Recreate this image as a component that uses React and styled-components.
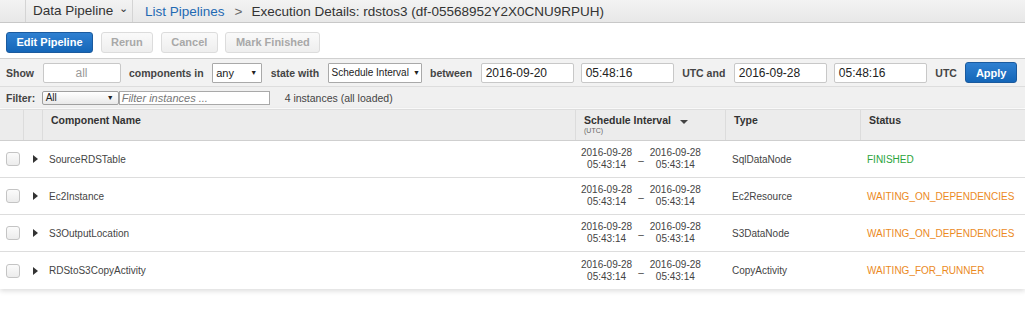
import React from 'react';
import styled, { createGlobalStyle } from 'styled-components';

const GlobalStyle = createGlobalStyle`
    * { box-sizing: border-box; }
    body {
        margin: 0;
        background: #ffffff;
        font-family: 'Liberation Sans', Arial, sans-serif;
        color: #333333;
    }
`;

const instances = [
    { name: "SourceRDSTable", type: "SqlDataNode", status: "FINISHED" },
    { name: "Ec2Instance", type: "Ec2Resource", status: "WAITING_ON_DEPENDENCIES" },
    { name: "S3OutputLocation", type: "S3DataNode", status: "WAITING_ON_DEPENDENCIES" },
    { name: "RDStoS3CopyActivity", type: "CopyActivity", status: "WAITING_FOR_RUNNER" },
];

const cols = "23px 19px 533px 150px 135px 1fr";

export default function App() {
    return (
        <Page>
            <GlobalStyle />
            <TopBar>
                <Spacer />
                <Service>Data Pipeline <Chevron>⌄</Chevron></Service>
                <Crumbs>
                    <CrumbLink>List Pipelines</CrumbLink>
                    <CrumbSep>&gt;</CrumbSep>
                    <span>Execution Details: rdstos3 (df-05568952Y2X0CNU9RPUH)</span>
                </Crumbs>
            </TopBar>

            <Toolbar>
                <Button primary>Edit Pipeline</Button>
                <Button disabled>Rerun</Button>
                <Button disabled>Cancel</Button>
                <Button disabled>Mark Finished</Button>
            </Toolbar>

            <FilterBar>
                <Label>Show</Label>
                <TextBox width="78px" center placeholderish>all</TextBox>
                <Label>components in</Label>
                <Select width="50px">any<Arrow>▼</Arrow></Select>
                <Label>state with</Label>
                <Select width="94px" small>Schedule Interval<Arrow>▼</Arrow></Select>
                <Label>between</Label>
                <TextBox width="93px">2016-09-20</TextBox>
                <TextBox width="93px">05:48:16</TextBox>
                <Label>UTC and</Label>
                <TextBox width="93px">2016-09-28</TextBox>
                <TextBox width="93px">05:48:16</TextBox>
                <Label>UTC</Label>
                <Button primary>Apply</Button>
            </FilterBar>

            <SearchBar>
                <Label>Filter:</Label>
                <MiniSelect>All<Arrow>▼</Arrow></MiniSelect>
                <SearchInput>Filter instances ...</SearchInput>
                <Count>4 instances (all loaded)</Count>
            </SearchBar>

            <Table>
                <HeadRow>
                    <HeadCell />
                    <HeadCell />
                    <HeadCell pad="8px">Component Name</HeadCell>
                    <HeadCell pad="8px">
                        <SortTitle>Schedule Interval <SortCaret /></SortTitle>
                        <Sub>(UTC)</Sub>
                    </HeadCell>
                    <HeadCell pad="8px">Type</HeadCell>
                    <HeadCell pad="8px">Status</HeadCell>
                </HeadRow>
                {instances.map(i =>
                    <Row key={i.name}>
                        <Cell center><Check /></Cell>
                        <Cell><Expand /></Cell>
                        <Cell pad="7px">{i.name}</Cell>
                        <Cell pad="7px">
                            <Interval>
                                <Stamp>2016-09-28<br />05:43:14</Stamp>
                                <Dash>–</Dash>
                                <Stamp>2016-09-28<br />05:43:14</Stamp>
                            </Interval>
                        </Cell>
                        <Cell pad="7px">{i.type}</Cell>
                        <Cell pad="7px">
                            <Status color={i.status === "FINISHED" ? "#2ba43b" : "#eb8a1e"}>{i.status}</Status>
                        </Cell>
                    </Row>
                )}
            </Table>
        </Page>
    )
}

const Page = styled.div`
    width: 1025px;
    height: 324px;
    overflow: hidden;
    background: #ffffff;
`;

const TopBar = styled.div`
    display: flex;
    align-items: stretch;
    height: 23px;
    background: linear-gradient(#f3f3f3, #e8e8e8);
    border-bottom: 1px solid #c8c8c8;
    font-size: 13.5px;
    color: #333333;
    white-space: nowrap;
`;

const Spacer = styled.div`
    width: 26px;
    flex-shrink: 0;
    border-right: 1px solid #d4d4d4;
`;

const Service = styled.div`
    display: flex;
    align-items: center;
    width: 107px;
    flex-shrink: 0;
    padding-left: 7px;
    border-right: 1px solid #d4d4d4;
    line-height: 1;
`;

const Chevron = styled.span`
    font-size: 11px;
    margin-left: 6px;
    position: relative;
    top: -3px;
`;

const Crumbs = styled.div`
    display: flex;
    align-items: center;
    padding-left: 12px;
`;

const CrumbLink = styled.span`
    color: #1f6ab3;
`;

const CrumbSep = styled.span`
    color: #666666;
    margin: 0 9px 0 10px;
`;

const Toolbar = styled.div`
    display: flex;
    align-items: center;
    gap: 7.5px;
    height: 36px;
    padding: 3px 6px 0;
    border-bottom: 1px solid #d0d0d0;
`;

const Button = styled.div`
    display: flex;
    align-items: center;
    flex-shrink: 0;
    height: 21px;
    padding: 0 9.5px;
    border-radius: 3px;
    font-size: 11px;
    font-weight: 700;
    white-space: nowrap;
    color: ${p => p.disabled ? "#a8a8a8" : "#ffffff"};
    border: 1px solid ${p => p.primary ? "#1a5a9e" : "#dcdcdc"};
    background: ${p => p.primary ? "linear-gradient(#2f80d1, #1466b8)" : "linear-gradient(#fafafa, #eeeeee)"};
`;

const FilterBar = styled.div`
    display: flex;
    align-items: center;
    gap: 7px;
    height: 28px;
    padding: 0 6px;
    background: #f2f2f2;
    border-bottom: 1px solid #dddddd;
`;

const Label = styled.span`
    flex-shrink: 0;
    font-size: 10.5px;
    font-weight: 700;
    color: #444444;
    margin: 0 1.5px;
    white-space: nowrap;
    &:first-child { margin-left: 0; }
`;

const TextBox = styled.div`
    display: flex;
    align-items: center;
    flex-shrink: 0;
    justify-content: ${p => p.center ? "center" : "flex-start"};
    width: ${p => p.width};
    height: 20px;
    padding: 0 4px;
    background: #ffffff;
    border: 1px solid #c8c8c8;
    border-radius: 2px;
    font-size: 12px;
    color: ${p => p.placeholderish ? "#999999" : "#222222"};
`;

const Select = styled.div`
    display: flex;
    align-items: center;
    flex-shrink: 0;
    justify-content: space-between;
    width: ${p => p.width};
    height: 20px;
    padding: 0 4px 0 3px;
    background: #ffffff;
    border: 1px solid #a9a9a9;
    border-radius: 1px;
    font-size: ${p => p.small ? "10px" : "11px"};
    color: #222222;
    white-space: nowrap;
`;

const Arrow = styled.span`
    font-size: 7px;
    color: #222222;
    margin-left: 4px;
`;

const SearchBar = styled.div`
    display: flex;
    align-items: center;
    height: 21px;
    padding: 0 6px;
    background: #f0f0f0;
`;

const MiniSelect = styled.div`
    display: flex;
    align-items: center;
    justify-content: space-between;
    width: 77px;
    height: 14px;
    margin-left: 5px;
    padding: 0 4px 0 3px;
    font-size: 10px;
    color: #222222;
    background: linear-gradient(#ffffff, #e9e9e9);
    border: 1px solid #a0a0a0;
    border-radius: 2px;
`;

const SearchInput = styled.div`
    display: flex;
    align-items: center;
    width: 151px;
    height: 14px;
    padding: 0 2px;
    background: #ffffff;
    border: 1px solid #a9a9a9;
    font-size: 11px;
    font-style: italic;
    color: #777777;
`;

const Count = styled.span`
    font-size: 10.5px;
    color: #444444;
    margin-left: 15px;
`;

const Table = styled.div`
    margin-top: 1px;
    border-top: 1px solid #dddddd;
    box-shadow: 0 2px 5px rgba(0, 0, 0, 0.14);
`;

const HeadRow = styled.div`
    display: grid;
    grid-template-columns: ${cols};
    height: 31px;
    background: #ececec;
    border-bottom: 1px solid #cfcfcf;
`;

const HeadCell = styled.div`
    padding: 4px ${p => p.pad || "0"} 0;
    border-left: 1px solid #dcdcdc;
    font-size: 10.5px;
    font-weight: 700;
    color: #333333;
    &:first-child { border-left: none; }
`;

const SortTitle = styled.div`
    display: flex;
    align-items: center;
`;

const SortCaret = styled.span`
    margin-left: 9px;
    margin-top: 4px;
    width: 0;
    height: 0;
    border-left: 4px solid transparent;
    border-right: 4px solid transparent;
    border-top: 4px solid #444444;
`;

const Sub = styled.div`
    font-size: 7px;
    font-weight: 400;
    color: #666666;
    margin-top: 1px;
`;

const Row = styled.div`
    display: grid;
    grid-template-columns: ${cols};
    height: 37px;
    border-bottom: 1px solid #dddddd;
    &:last-child { border-bottom: none; }
`;

const Cell = styled.div`
    display: flex;
    align-items: center;
    justify-content: ${p => p.center ? "center" : "flex-start"};
    padding: 0 ${p => p.pad || "0"};
    font-size: 10px;
    color: #444444;
    white-space: nowrap;
`;

const Check = styled.span`
    width: 14px;
    height: 14px;
    margin-left: 2px;
    border: 1px solid #c4c4c4;
    border-radius: 3px;
    background: linear-gradient(#fbfbfb, #ececec);
`;

const Expand = styled.span`
    margin-left: 10px;
    width: 0;
    height: 0;
    border-top: 4px solid transparent;
    border-bottom: 4px solid transparent;
    border-left: 5px solid #333333;
`;

const Interval = styled.div`
    display: flex;
    align-items: center;
    gap: 6px;
    margin-left: -1px;
`;

const Stamp = styled.div`
    text-align: center;
    font-size: 10px;
    line-height: 12px;
    color: #444444;
`;

const Dash = styled.span`
    font-size: 10px;
    margin-top: 3px;
`;

const Status = styled.span`
    font-size: 10px;
    color: ${p => p.color};
`;
